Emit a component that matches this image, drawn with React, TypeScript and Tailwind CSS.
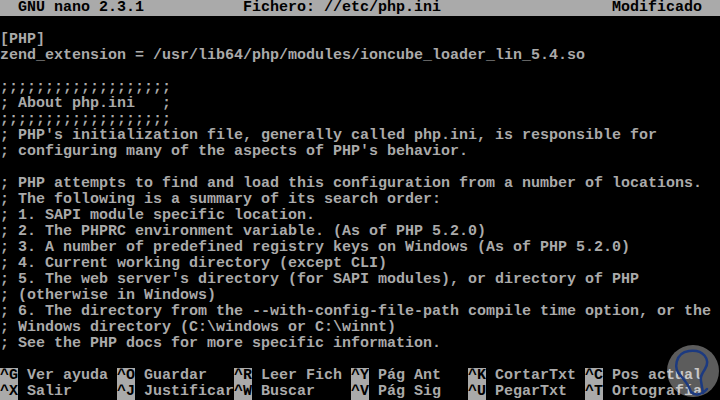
import React from 'react';

const lines: string[] = [
  '',
  '[PHP]',
  'zend_extension = /usr/lib64/php/modules/ioncube_loader_lin_5.4.so',
  '',
  ';;;;;;;;;;;;;;;;;;;',
  '; About php.ini   ;',
  ';;;;;;;;;;;;;;;;;;;',
  "; PHP's initialization file, generally called php.ini, is responsible for",
  "; configuring many of the aspects of PHP's behavior.",
  '',
  '; PHP attempts to find and load this configuration from a number of locations.',
  '; The following is a summary of its search order:',
  '; 1. SAPI module specific location.',
  '; 2. The PHPRC environment variable. (As of PHP 5.2.0)',
  '; 3. A number of predefined registry keys on Windows (As of PHP 5.2.0)',
  '; 4. Current working directory (except CLI)',
  "; 5. The web server's directory (for SAPI modules), or directory of PHP",
  '; (otherwise in Windows)',
  '; 6. The directory from the --with-config-file-path compile time option, or the',
  '; Windows directory (C:\\windows or C:\\winnt)',
  '; See the PHP docs for more specific information.',
  '',
];

const shortcuts: [string, string][][] = [
  [
    ['^G', 'Ver ayuda'],
    ['^O', 'Guardar'],
    ['^R', 'Leer Fich'],
    ['^Y', 'Pág Ant'],
    ['^K', 'CortarTxt'],
    ['^C', 'Pos actual'],
  ],
  [
    ['^X', 'Salir'],
    ['^J', 'Justificar'],
    ['^W', 'Buscar'],
    ['^V', 'Pág Sig'],
    ['^U', 'PegarTxt'],
    ['^T', 'Ortografía'],
  ],
];

const Shortcut: React.FC<{ k: string; label: string }> = ({ k, label }) => (
  <div className="flex w-[117px] shrink-0">
    <span className="bg-[#aaaaaa] text-black">{k}</span>
    <span className="ml-[9px]">{label}</span>
  </div>
);

export default function App() {
  return (
    <div
      className="relative w-[720px] h-[400px] overflow-hidden bg-black text-[#aaaaaa] text-[15px] leading-[16px] font-bold whitespace-pre"
      style={{ fontFamily: '"Liberation Mono", "DejaVu Sans Mono", monospace' }}
    >
      <div className="flex h-[16px] bg-[#aaaaaa] text-black">
        <span className="w-[243px] pl-[18px]">GNU nano 2.3.1</span>
        <span className="w-[369px]">Fichero: //etc/php.ini</span>
        <span>Modificado</span>
      </div>
      {lines.map((l, i) => (
        <div key={i} className="h-[16px]">
          {l}
        </div>
      ))}
      {shortcuts.map((row, i) => (
        <div key={i} className="flex h-[16px]">
          {row.map(([k, label]) => (
            <Shortcut key={k} k={k} label={label} />
          ))}
        </div>
      ))}
      <svg
        className="absolute left-[667px] top-[345px]"
        width="52"
        height="52"
        viewBox="0 0 52 52"
      >
        <circle cx="26" cy="26" r="26" fill="#ffffff" fillOpacity="0.36" />
        <path
          d="M14 31 C6 24 8 8 22 6 C36 4 44 14 38 24 C35 29 33 31 34 36 L36 48 M14 31 C18 36 22 40 24 47 C28 51 35 50 40 44"
          fill="none"
          stroke="#1c3a80"
          strokeWidth="2.5"
          strokeLinecap="round"
        />
      </svg>
    </div>
  );
}
